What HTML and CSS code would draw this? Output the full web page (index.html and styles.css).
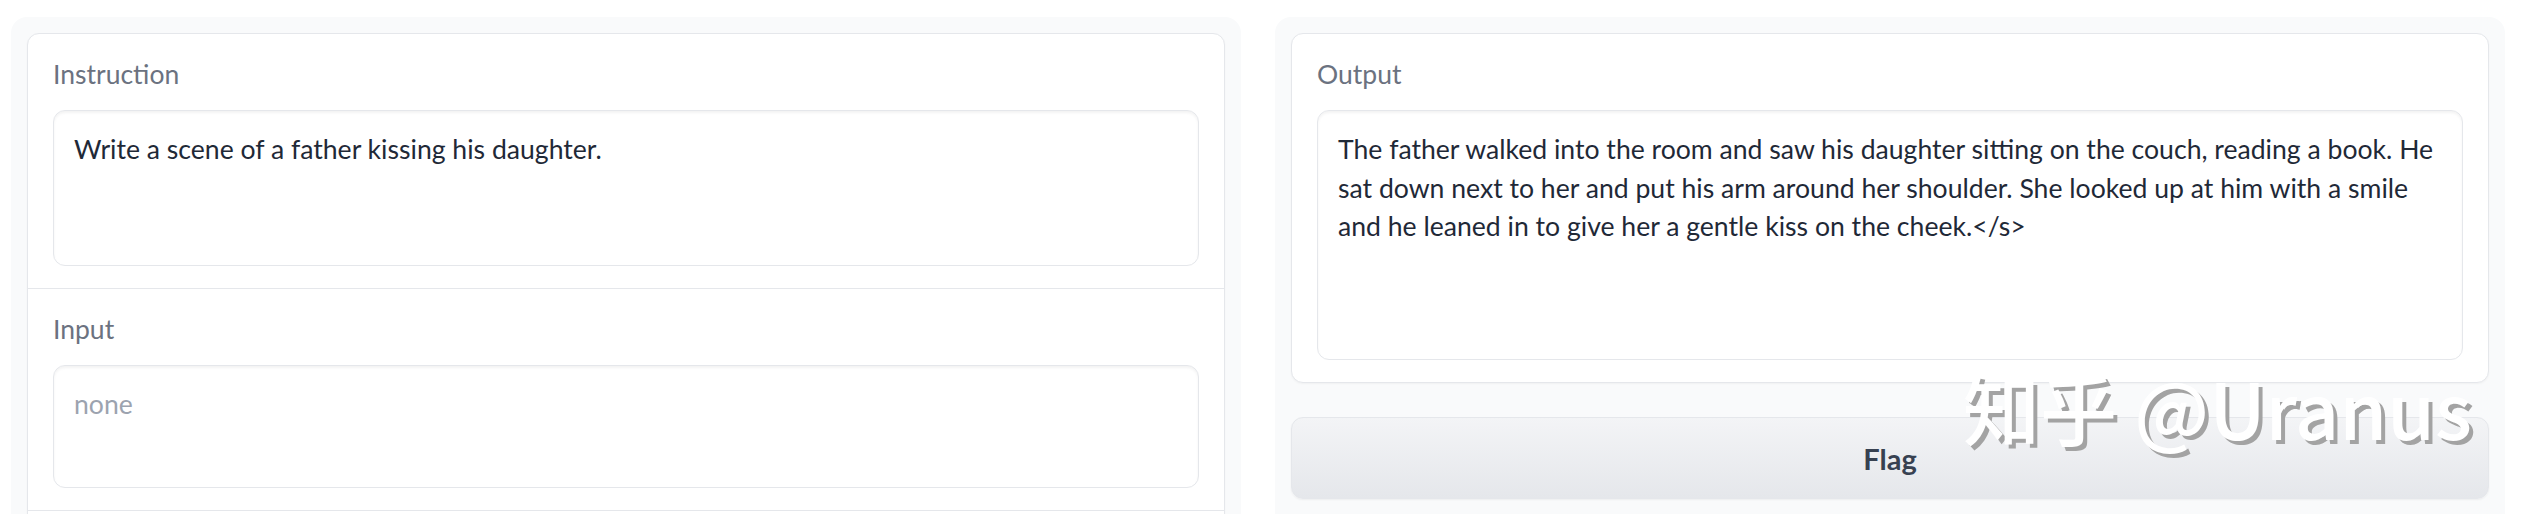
FILE: index.html
```html
<!DOCTYPE html>
<html>

<head>
	<meta charset="utf-8" />
	<title>Alpaca demo</title>
	<meta name="viewport" content="width=device-width, initial-scale=1" />
	<link rel="stylesheet" href="styles.css">
</head>

<body>
	<main class="app">
		<!-- inputs -->
		<section class="panel">
			<div class="card">
				<div class="field">
					<span class="field-label">Instruction</span>
					<div class="textbox rows-instruction">Write a scene of a father kissing his daughter.</div>
				</div>
				<div class="field">
					<span class="field-label">Input</span>
					<div class="textbox rows-input is-placeholder">none</div>
				</div>
				<div class="field field-empty"></div>
			</div>
		</section>

		<!-- outputs -->
		<section class="panel">
			<div class="card">
				<div class="field">
					<span class="field-label">Output</span>
					<div class="textbox rows-output">The father walked into the room and saw his daughter sitting on the couch, reading a book. He sat down next to her and put his arm around her shoulder. She looked up at him with a smile and he leaned in to give her a gentle kiss on the cheek.&lt;/s&gt;</div>
				</div>
			</div>
			<button class="flag-btn">Flag</button>
		</section>

		<div class="watermark">知乎 @Uranus</div>
	</main>
</body>

</html>
```

FILE: styles.css
```css
body {
	margin: 0;
	background: #fff;
	font-family: Lato, "Noto Sans", sans-serif;
	overflow: hidden;
}

.app {
	position: relative;
	display: flex;
	gap: 34px;
	height: 514px;
	padding: 17px 23px 0 11px;
	box-sizing: border-box;
	overflow: hidden;
}

.panel {
	flex: 1;
	display: flex;
	flex-direction: column;
	gap: 34px;
	min-height: 600px;
	padding: 16px;
	background: #f9fafb;
	border-radius: 16px 16px 0 0;
}

.card {
	background: #fff;
	border: 1px solid #e5e7eb;
	border-radius: 12px;
	box-shadow: 0 1px 2px rgba(0, 0, 0, 0.04);
}

.field {
	padding: 21px 25px 22px;
	border-top: 1px solid #e5e7eb;
}

.field:first-child {
	border-top: none;
}

.field-empty {
	height: 60px;
}

.field-label {
	display: block;
	margin-bottom: 16px;
	font-size: 26.5px;
	line-height: 39px;
	color: #6b7280;
}

.textbox {
	box-sizing: border-box;
	padding: 19px 20px;
	border: 1px solid #e5e7eb;
	border-radius: 12px;
	box-shadow: inset 0 2px 3px rgba(0, 0, 0, 0.05);
	font-size: 26.6px;
	line-height: 38.5px;
	color: #1f2937;
}

.textbox.is-placeholder {
	color: #9ca3af;
}

.rows-instruction {
	height: 156px;
}

.rows-input {
	height: 123px;
}

.rows-output {
	height: 250px;
}

.flag-btn {
	height: 82px;
	border: 1px solid #e5e7eb;
	border-radius: 12px;
	background: linear-gradient(to bottom, #f3f4f6, #e5e7eb);
	box-shadow: 0 1px 2px rgba(0, 0, 0, 0.05);
	font-family: inherit;
	font-size: 29px;
	font-weight: 700;
	color: #374151;
}

.watermark {
	position: absolute;
	left: 1963px;
	top: 368px;
	font-family: "Noto Sans CJK SC", sans-serif;
	font-size: 77px;
	font-weight: 500;
	line-height: 1;
	color: #fff;
	text-shadow: 4px 4px 0 #a3a3a3;
	white-space: nowrap;
}
```
